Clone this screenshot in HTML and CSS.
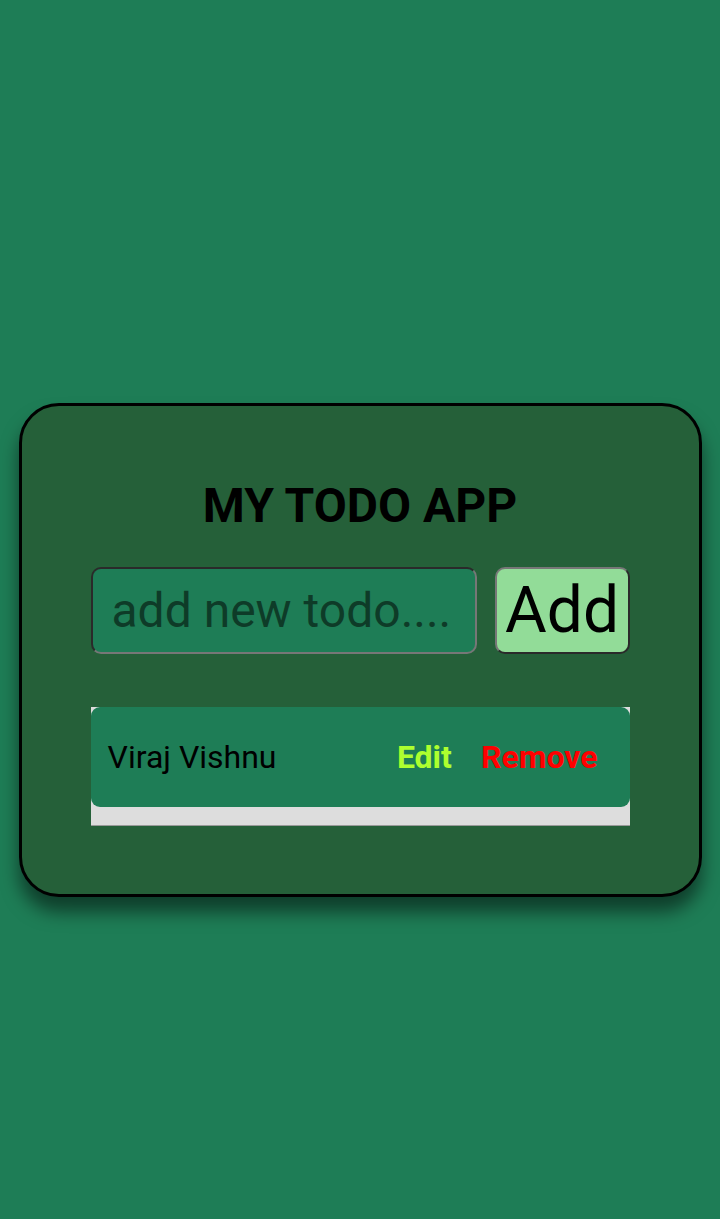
FILE: index.html
```html
<!DOCTYPE html>
<html lang="en">
<head>
    <meta charset="UTF-8">
    <meta name="viewport" content="width=device-width, initial-scale=1.0">
    <title>My Todo App</title>
    <link rel="stylesheet" href="styles.css">
</head>
<body>
    <div class="todo-container">
        <h1>MY TODO APP</h1>
        <form class="todo-form" id="todoForm">
            <input type="text" id="todoInput" placeholder="add new todo....">
            <button type="submit">Add</button>
        </form>
        <ul class="todo-list" id="todoList">
            <li class="todo-item">
                <span class="todo-text">Viraj Vishnu</span>
                <div class="todo-actions">
                    <a href="#" class="edit-btn">Edit</a>
                    <a href="#" class="remove-btn">Remove</a>
                </div>
            </li>
        </ul>
    </div>
</body>
</html>
```

FILE: styles.css
```css
body {
    background-color: #1e7d56;
    margin: 0;
    height: 100vh;
    display: flex;
    justify-content: center;
    align-items: center;
    font-family: Roboto, Arial, sans-serif;
}

.todo-container {
    background-color: #256039;
    border: 3px solid #000;
    border-radius: 40px;
    box-shadow: 0 15px 18px rgba(0, 0, 0, 0.5);
    width: 683px;
    box-sizing: border-box;
    padding: 76px 69px 68px;
    margin-top: 81px;
}

h1 {
    margin: 0 0 37px;
    text-align: center;
    font-size: 48px;
    font-weight: bold;
    line-height: 1;
    color: #000;
}

.todo-form {
    display: flex;
    gap: 18px;
    margin-bottom: 53px;
}

.todo-form input {
    flex: 1;
    height: 87px;
    box-sizing: border-box;
    padding: 0 19px;
    background-color: #1e7d56;
    border: 2px solid;
    border-color: #2a2a2a #777 #777 #2a2a2a;
    border-radius: 10px;
    font-family: Roboto, Arial, sans-serif;
    font-size: 48px;
    color: #000;
    outline: none;
    min-width: 0;
}

.todo-form input::placeholder {
    color: #0e3b28;
}

.todo-form button {
    width: 135px;
    height: 87px;
    padding: 0;
    background-color: #92dc98;
    border: 2px solid;
    border-color: #777 #2a2a2a #2a2a2a #777;
    border-radius: 10px;
    font-family: Roboto, Arial, sans-serif;
    font-size: 64px;
    color: #000;
    cursor: pointer;
}

.todo-list {
    list-style: none;
    margin: 0;
    padding: 0 0 18px;
    background-color: #ddd;
    border-bottom: 1px solid #999;
}

.todo-item {
    display: flex;
    justify-content: space-between;
    align-items: center;
    height: 100px;
    padding: 0 32px 0 17px;
    background-color: #1e7d56;
    border-radius: 9px;
}

.todo-text {
    font-size: 32px;
    color: #000;
}

.todo-actions {
    display: flex;
    gap: 29px;
}

.todo-actions a {
    font-size: 32px;
    font-weight: bold;
    text-decoration: none;
}

.edit-btn {
    color: #adff2f;
}

.remove-btn {
    color: #ff0000;
}
```
